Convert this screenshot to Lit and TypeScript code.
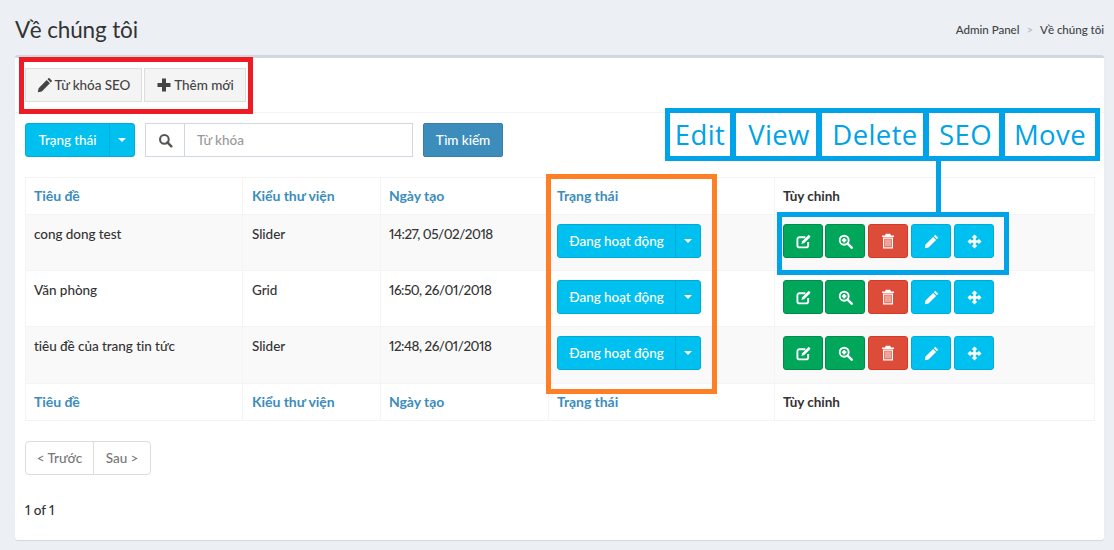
import { LitElement, html, css, svg } from "lit";
import { customElement } from "lit/decorators.js";

const caret = html`<span class="caret"></span>`;
const ic = (w: number, body: unknown) =>
  html`<svg width=${w} height=${w} viewBox="0 0 16 16" fill="currentColor">${body}</svg>`;
const icons = {
  pencil: (w = 16) => ic(w, svg`<path d="M12 .8 15.2 4 13.7 5.5 10.5 2.3ZM9.7 3.1 12.9 6.3 4.8 14.4 .8 15.2 1.6 11.2Z"/>`),
  plus: (w = 16) => ic(w, svg`<path d="M6 1.5h4V6h4.5v4H10v4.5H6V10H1.5V6H6Z"/>`),
  search: (w = 16) => ic(w, svg`<circle cx="6.8" cy="6.8" r="4.6" fill="none" stroke="currentColor" stroke-width="2.2"/><path d="M10 10l4.2 4.2" stroke="currentColor" stroke-width="2.6" stroke-linecap="round"/>`),
  edit: (w = 16) => ic(w, svg`<path d="M13 8.5V12.2a2 2 0 0 1-2 2H3.5a2 2 0 0 1-2-2V5.5a2 2 0 0 1 2-2H10" fill="none" stroke="currentColor" stroke-width="2"/><path d="M13.6 .8 15.6 2.8 8.6 9.8 5.8 10.6 6.6 7.8Z"/>`),
  zoom: (w = 16) => ic(w, svg`<circle cx="6.6" cy="6.6" r="4.8" fill="none" stroke="currentColor" stroke-width="2"/><path d="M10.2 10.2l4.4 4.4" stroke="currentColor" stroke-width="2.6" stroke-linecap="round"/><path d="M5.5 4.2h2.2v1.3H9v2.2H7.7V9H5.5V7.7H4.2V5.5h1.3Z"/>`),
  trash: (w = 16) => ic(w, svg`<path d="M5.8 .8h4.4l.8 1.6h3v1.5H2V2.4h3ZM3 4.6h10V15.4H3Zm1.3 1.1v8.5h7.4V5.7Z"/><path d="M5.5 6.2h1v7.4h-1ZM7.5 6.2h1v7.4h-1ZM9.5 6.2h1v7.4h-1Z"/>`),
  move: (w = 16) => ic(w, svg`<path d="M8 .5 11 3.5 9.3 4.3V6.7H11.7L12.5 5 15.5 8 12.5 11 11.7 9.3H9.3V11.7L11 12.5 8 15.5 5 12.5 6.7 11.7V9.3H4.3L3.5 11 .5 8 3.5 5 4.3 6.7H6.7V4.3L5 3.5Z"/>`),
};

const rows = [
  ["cong dong test", "Slider", "14:27, 05/02/2018"],
  ["Văn phòng", "Grid", "16:50, 26/01/2018"],
  ["tiêu đề của trang tin tức", "Slider", "12:48, 26/01/2018"],
];

@customElement("app-root")
export class AppRoot extends LitElement {
  static styles = css`
    :host { display: block; position: relative; width: 1114px; height: 550px; overflow: hidden; background: #ecf0f5;
      font-family: "Lato", "Noto Sans", sans-serif; font-size: 13.5px; font-weight: 500; letter-spacing: -0.05px; color: #333; font-variant-numeric: proportional-nums; }
    * { box-sizing: border-box; }
    .head { display: flex; justify-content: space-between; align-items: center; height: 55px; padding: 3px 10px 0 15px; }
    h1 { margin: 0; font-size: 22.5px; font-weight: 400; letter-spacing: -0.15px; color: #333; }
    .crumb { font-size: 11.6px; display: flex; gap: 7px; color: #444; }
    .crumb i { font-style: normal; color: #bbb; }
    .card { margin: 0 10px 0 15px; height: 485px; background: #fff; border-top: 3px solid #d2d6de; border-radius: 3px; box-shadow: 0 1px 1px rgba(0,0,0,.1); }
    .tools { display: flex; gap: 2px; height: 55px; padding: 10px 10px 0; border-bottom: 1px solid #f4f4f4; }
    .tbtn { display: flex; align-items: center; justify-content: center; gap: 2px; height: 34px; white-space: nowrap; background: #f4f4f4; border: 1px solid #ddd; color: #444; }
    .tbtn:first-child { width: 117px; }
    .tbtn:last-child { width: 102px; }
    .body { padding: 10px 10px 0; }
    .filter { display: flex; height: 34px; }
    .drop { display: flex; height: 34px; background: #00c0ef; border: 1px solid #00acd6; border-radius: 3px; color: #fff; }
    .drop .l { display: flex; align-items: center; justify-content: center; }
    .drop .r { display: flex; align-items: center; justify-content: center; border-left: 1px solid #00acd6; }
    .f-drop .l { width: 83px; }
    .f-drop .r { width: 25px; }
    .caret { width: 0; height: 0; border: 4px solid transparent; border-top-color: #fff; border-bottom: 0; }
    .group { display: flex; margin-left: 10px; width: 268px; border: 1px solid #d2d6de; }
    .addon { width: 39px; display: flex; align-items: center; justify-content: center; border-right: 1px solid #d2d6de; color: #555; }
    .ph { padding-left: 12px; display: flex; align-items: center; color: #999; }
    .find { margin-left: 10px; width: 80px; display: flex; align-items: center; justify-content: center; background: #3c8dbc; border: 1px solid #367fa9; border-radius: 2px; color: #fff; }
    table { border-collapse: collapse; table-layout: fixed; width: 1069px; margin-top: 20px; border: 1px solid #f4f4f4; }
    td, th { border: 1px solid #f4f4f4; padding: 0 8px; text-align: left; vertical-align: top; line-height: 18px; }
    td:nth-child(2), th:nth-child(2) { padding-left: 9px; }
    th { height: 37px; padding-top: 9px; font-size: 14px; font-weight: 700; color: #3c8dbc; }
    th.dark { color: #333; font-size: 13.5px; }
    td { height: 56px; padding-top: 10px; }
    td.date { letter-spacing: -0.5px; }
    tbody tr:last-child td { height: 57px; }
    td.mid { padding-top: 9px; }
    tbody tr:nth-child(odd) { background: #f9f9f9; }
    .st-drop { width: 144px; }
    .st-drop .l { width: 117px; }
    .st-drop .r { flex: 1; }
    .acts { display: flex; gap: 2px; }
    .act { display: flex; align-items: center; justify-content: center; width: 40px; height: 34px; margin-left: 1px; border: 1px solid; border-radius: 3px; color: #fff; }
    .act:first-child, .act:nth-child(2) { margin-left: 0; }
    .act.g { background: #00a65a; border-color: #008d4c; }
    .act.r { background: #dd4b39; border-color: #d73925; }
    .act.c { background: #00c0ef; border-color: #00acd6; }
    .pager { display: flex; width: 126px; height: 34px; margin-top: 20px; border: 1px solid #ddd; border-radius: 4px; color: #777; }
    .pager span { display: flex; align-items: center; justify-content: center; }
    .pager .p { width: 68px; border-right: 1px solid #ddd; }
    .pager .n { flex: 1; }
    .count { margin-top: 26px; line-height: 18px; color: #333; }
    .mark { position: absolute; border: 5px solid; pointer-events: none; }
    .red { left: 19px; top: 57px; width: 234px; height: 57px; border-color: #ed1c24; }
    .orange { left: 546px; top: 174px; width: 171px; height: 220px; border-color: #ff7f27; }
    .blue { border-color: #00a2e8; }
    .b-acts { left: 777px; top: 212px; width: 232px; height: 63px; }
    .stem { position: absolute; left: 936px; top: 160px; width: 5px; height: 53px; background: #00a2e8; }
    .legend { position: absolute; left: 665px; top: 108px; width: 435px; height: 53px; display: grid; grid-template-columns: 66px 86px 107px 76px 90px;
      background: #00a2e8; border: 5px solid #00a2e8; }
    .legend span { background: #fff; display: flex; align-items: center; justify-content: center; margin-right: 6px; padding-bottom: 1px; color: #00a2e8; font-size: 27.5px; font-weight: 400; letter-spacing: 0.4px; font-family: "Open Sans", sans-serif; }
    .legend span:nth-child(2) { padding-left: 6px; }
    .legend span:nth-child(3) { padding-left: 5px; }
    .legend span:nth-child(4) { padding-left: 3px; }
    .legend span:last-child { margin-right: 0; }
  `;

  private status() {
    return html`<div class="drop st-drop"><span class="l">Đang hoạt động</span><span class="r">${caret}</span></div>`;
  }

  private headCells() {
    return html`<tr><th>Tiêu đề</th><th>Kiểu thư viện</th><th>Ngày tạo</th><th>Trạng thái</th><th class="dark">Tùy chỉnh</th></tr>`;
  }

  render() {
    return html`
      <div class="head">
        <h1>Về chúng tôi</h1>
        <div class="crumb"><span>Admin Panel</span><i>&gt;</i><span>Về chúng tôi</span></div>
      </div>
      <div class="card">
        <div class="tools">
          <div class="tbtn">${icons.pencil(16)}Từ khóa SEO</div>
          <div class="tbtn">${icons.plus(16)}Thêm mới</div>
        </div>
        <div class="body">
          <div class="filter">
            <div class="drop f-drop"><span class="l">Trạng thái</span><span class="r">${caret}</span></div>
            <div class="group"><span class="addon">${icons.search(15)}</span><span class="ph">Từ khóa</span></div>
            <div class="find">Tìm kiếm</div>
          </div>
          <table>
            <colgroup><col style="width:217px" /><col style="width:138px" /><col style="width:168px" /><col style="width:226px" /><col style="width:320px" /></colgroup>
            <thead>${this.headCells()}</thead>
            <tbody>
              ${rows.map(r => html`<tr>
                <td>${r[0]}</td><td>${r[1]}</td><td class="date">${r[2]}</td>
                <td class="mid">${this.status()}</td>
                <td class="mid"><div class="acts">
                  <div class="act g">${icons.edit(15)}</div>
                  <div class="act g">${icons.zoom(15)}</div>
                  <div class="act r">${icons.trash(16)}</div>
                  <div class="act c">${icons.pencil(15)}</div>
                  <div class="act c">${icons.move(15)}</div>
                </div></td>
              </tr>`)}
            </tbody>
            <tfoot>${this.headCells()}</tfoot>
          </table>
          <div class="pager"><span class="p">&lt; Trước</span><span class="n">Sau &gt;</span></div>
          <div class="count">1 of 1</div>
        </div>
      </div>
      <div class="mark red"></div>
      <div class="mark orange"></div>
      <div class="legend"><span>Edit</span><span>View</span><span>Delete</span><span>SEO</span><span>Move</span></div>
      <div class="stem"></div>
      <div class="mark blue b-acts"></div>
    `;
  }
}
